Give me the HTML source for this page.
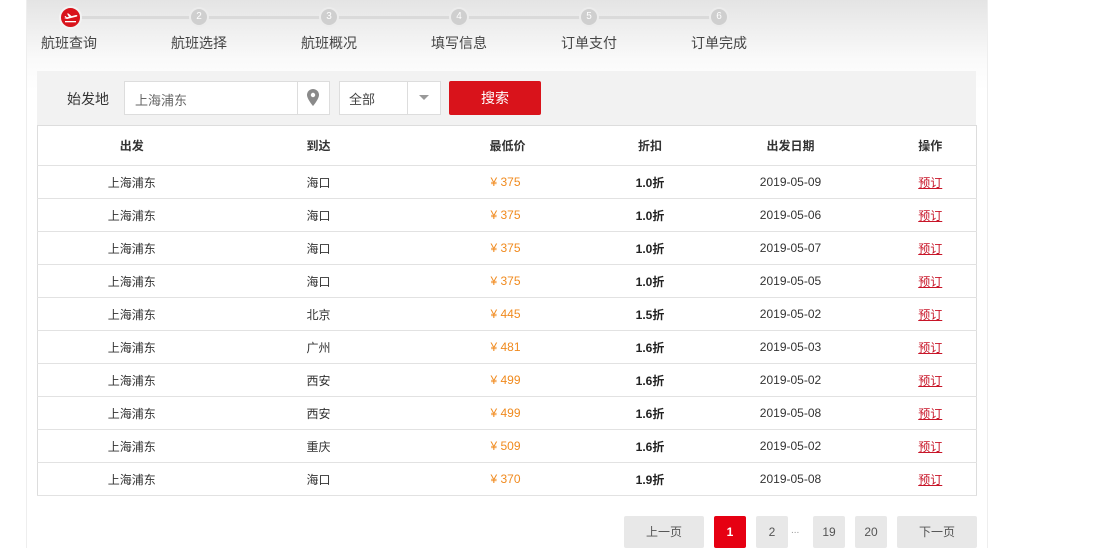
<!DOCTYPE html>
<html><head><meta charset="utf-8"><style>
*{margin:0;padding:0;box-sizing:border-box}
body{width:1106px;height:548px;background:#fff;font-family:"Liberation Sans","Noto Sans CJK SC",sans-serif;position:relative;overflow:hidden;color:#333}
.wrap{position:absolute;left:26px;top:0;width:962px;height:548px;background:linear-gradient(#e4e4e4 0px,#fafafa 60px,#fff 90px);border-left:1px solid #eee;border-right:1px solid #eee}
.a{position:absolute}
.line{position:absolute;top:16px;height:3px;background:#dadada}
.c{position:absolute;width:20px;height:20px;border-radius:50%;background:#cfcfcf;border:2px solid #ececec;color:#fff;font-size:10px;text-align:center;line-height:16px;top:7px}
.lbl{position:absolute;top:33px;font-size:14px;color:#444}
.search{position:absolute;left:37px;top:71px;width:939px;height:54px;background:#f2f2f2}
table{position:absolute;left:37px;top:125px;width:940px;border-collapse:collapse;border:1px solid #ddd;background:#fff;font-size:12px}
td,th{height:33px;border-bottom:1px solid #e2e2e2;padding:0;color:#333}
th{height:40px;font-weight:bold;font-size:12px}
.p{color:#f08a1e}
.b{font-weight:bold;color:#222}
.r a{color:#c81528;text-decoration:underline}
.pg{position:absolute;top:516px;height:32px;background:#e8e8e8;border-radius:2px;font-size:12px;color:#555;text-align:center;line-height:32px}
</style></head><body>
<div class="wrap"></div>
<div class="line" style="left:80px;width:630px"></div>
<div class="c" style="left:59px;top:6px;width:23px;height:23px;background:#d9131b;border:2px solid #f3f3f3"><svg width="19" height="19" viewBox="0 0 19 19"><path d="M3 10 L15 7 Q17 7 16 8.5 L6 11 Z M8 9 L6 5.5 L7.5 5.5 L11 8.5 Z M5 10.5 L3.5 8 L4.5 8 L6.5 10 Z" fill="#fff"/><rect x="4" y="13" width="11" height="1.3" fill="#fff"/></svg></div>
<div class="c" style="left:189px">2</div>
<div class="c" style="left:319px">3</div>
<div class="c" style="left:449px">4</div>
<div class="c" style="left:579px">5</div>
<div class="c" style="left:709px">6</div>
<div class="lbl" style="left:41px">航班查询</div>
<div class="lbl" style="left:171px">航班选择</div>
<div class="lbl" style="left:301px">航班概况</div>
<div class="lbl" style="left:431px">填写信息</div>
<div class="lbl" style="left:561px">订单支付</div>
<div class="lbl" style="left:691px">订单完成</div>
<div class="search"></div>
<div class="a" style="left:67px;top:89px;font-size:14px;color:#333">始发地</div>
<div class="a" style="left:124px;top:81px;width:206px;height:34px;background:#fff;border:1px solid #ddd"></div>
<div class="a" style="left:135px;top:90px;font-size:13px;color:#666">上海浦东</div>
<div class="a" style="left:297px;top:81px;width:1px;height:34px;background:#ddd"></div>
<svg class="a" style="left:307px;top:89px" width="12" height="17" viewBox="0 0 12 17"><path d="M6 0 A6 6 0 0 1 12 6 C12 10 6 17 6 17 C6 17 0 10 0 6 A6 6 0 0 1 6 0 Z" fill="#8a8a8a"/><circle cx="6" cy="6" r="2.2" fill="#fff"/></svg>
<div class="a" style="left:339px;top:81px;width:102px;height:34px;background:#fff;border:1px solid #ddd"></div>
<div class="a" style="left:407px;top:81px;width:1px;height:34px;background:#ddd"></div>
<div class="a" style="left:349px;top:89px;font-size:13px;color:#444">全部</div>
<div class="a" style="left:419px;top:95px;width:0;height:0;border-left:5px solid transparent;border-right:5px solid transparent;border-top:5px solid #999"></div>
<div class="a" style="left:449px;top:81px;width:92px;height:34px;background:#d9131b;border-radius:2px;color:#fff;font-size:14px;text-align:center;line-height:34px">搜索</div>
<table>
<colgroup><col style="width:188px"><col style="width:188px"><col style="width:190px"><col style="width:93px"><col style="width:188px"><col></colgroup>
<tr><th>出发</th><th style="text-align:left;padding-left:81px">到达</th><th style="text-align:left;padding-left:76px">最低价</th><th>折扣</th><th>出发日期</th><th>操作</th></tr>
<tr><td align=center>上海浦东</td><td style="padding-left:81px">海口</td><td class=p style="padding-left:77px">¥ 375</td><td align=center class=b>1.0折</td><td align=center>2019-05-09</td><td align=center class=r><a>预订</a></td></tr>
<tr><td align=center>上海浦东</td><td style="padding-left:81px">海口</td><td class=p style="padding-left:77px">¥ 375</td><td align=center class=b>1.0折</td><td align=center>2019-05-06</td><td align=center class=r><a>预订</a></td></tr>
<tr><td align=center>上海浦东</td><td style="padding-left:81px">海口</td><td class=p style="padding-left:77px">¥ 375</td><td align=center class=b>1.0折</td><td align=center>2019-05-07</td><td align=center class=r><a>预订</a></td></tr>
<tr><td align=center>上海浦东</td><td style="padding-left:81px">海口</td><td class=p style="padding-left:77px">¥ 375</td><td align=center class=b>1.0折</td><td align=center>2019-05-05</td><td align=center class=r><a>预订</a></td></tr>
<tr><td align=center>上海浦东</td><td style="padding-left:81px">北京</td><td class=p style="padding-left:77px">¥ 445</td><td align=center class=b>1.5折</td><td align=center>2019-05-02</td><td align=center class=r><a>预订</a></td></tr>
<tr><td align=center>上海浦东</td><td style="padding-left:81px">广州</td><td class=p style="padding-left:77px">¥ 481</td><td align=center class=b>1.6折</td><td align=center>2019-05-03</td><td align=center class=r><a>预订</a></td></tr>
<tr><td align=center>上海浦东</td><td style="padding-left:81px">西安</td><td class=p style="padding-left:77px">¥ 499</td><td align=center class=b>1.6折</td><td align=center>2019-05-02</td><td align=center class=r><a>预订</a></td></tr>
<tr><td align=center>上海浦东</td><td style="padding-left:81px">西安</td><td class=p style="padding-left:77px">¥ 499</td><td align=center class=b>1.6折</td><td align=center>2019-05-08</td><td align=center class=r><a>预订</a></td></tr>
<tr><td align=center>上海浦东</td><td style="padding-left:81px">重庆</td><td class=p style="padding-left:77px">¥ 509</td><td align=center class=b>1.6折</td><td align=center>2019-05-02</td><td align=center class=r><a>预订</a></td></tr>
<tr><td align=center>上海浦东</td><td style="padding-left:81px">海口</td><td class=p style="padding-left:77px">¥ 370</td><td align=center class=b>1.9折</td><td align=center>2019-05-08</td><td align=center class=r><a>预订</a></td></tr>
</table>
<div class="pg" style="left:624px;width:80px">上一页</div>
<div class="pg" style="left:714px;width:32px;background:#e60012;color:#fff;font-weight:bold">1</div>
<div class="pg" style="left:756px;width:32px">2</div>
<div class="a" style="left:791px;top:525px;font-size:10px;color:#999">...</div>
<div class="pg" style="left:813px;width:32px">19</div>
<div class="pg" style="left:855px;width:32px">20</div>
<div class="pg" style="left:897px;width:80px">下一页</div>
</body></html>
